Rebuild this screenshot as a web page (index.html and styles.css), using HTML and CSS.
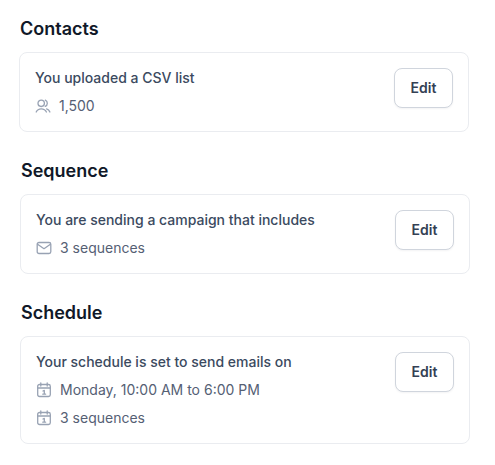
FILE: index.html
```html
<!DOCTYPE html>
<html lang="en">
<head>
  <meta charset="UTF-8">
  <title>Campaign summary</title>
  <meta name="viewport" content="width=device-width, initial-scale=1.0">
  <link rel="stylesheet" href="styles.css">
</head>
<body>
  <svg class="sprite" width="0" height="0">
    <symbol id="icon-users" viewBox="0 0 16 16">
      <circle cx="6.200" cy="5.300" r="3.200"/>
      <path d="M1.200 14c.9-2 2.700-3.200 5-3.200s4.300 1.200 5.200 3.200M10.300 2.200c1.200.5 2 1.700 2 3.100s-.8 2.600-2 3.100M11.600 10.800c1.500.4 2.700 1.600 3.300 3.200"/>
    </symbol>
    <symbol id="icon-mail" viewBox="0 0 16 16">
      <rect x="1.200" y="2.500" width="13.600" height="11" rx="1.800"/>
      <path d="M1.600 4.200L8 8.700l6.400-4.500"/>
    </symbol>
    <symbol id="icon-calendar" viewBox="0 0 16 16">
      <rect x="1.700" y="2.500" width="12.600" height="12" rx="1.800"/>
      <path d="M1.700 6h12.600M4.800 1v3M11.200 1v3M7 9l1.300-.6v3.800M6.800 12.200h2.800"/>
    </symbol>
  </svg>

  <main class="summary">
    <section class="step step-first">
      <h2>Contacts</h2>
      <div class="card">
        <div class="details">
          <p class="title">You uploaded a CSV list</p>
          <div class="meta"><svg class="icon"><use href="#icon-users"/></svg><span>1,500</span></div>
        </div>
        <button class="edit-btn" type="button">Edit</button>
      </div>
    </section>

    <section class="step">
      <h2>Sequence</h2>
      <div class="card">
        <div class="details">
          <p class="title">You are sending a campaign that includes</p>
          <div class="meta"><svg class="icon"><use href="#icon-mail"/></svg><span>3 sequences</span></div>
        </div>
        <button class="edit-btn" type="button">Edit</button>
      </div>
    </section>

    <section class="step">
      <h2>Schedule</h2>
      <div class="card">
        <div class="details">
          <p class="title">Your schedule is set to send emails on</p>
          <div class="meta"><svg class="icon"><use href="#icon-calendar"/></svg><span>Monday, 10:00 AM to 6:00 PM</span></div>
          <div class="meta"><svg class="icon"><use href="#icon-calendar"/></svg><span>3 sequences</span></div>
        </div>
        <button class="edit-btn" type="button">Edit</button>
      </div>
    </section>
  </main>
</body>
</html>
```
FILE: styles.css
```css
* {
  box-sizing: border-box;
}
body {
  margin: 0;
  font-family: 'Inter', sans-serif;
  font-size: 14px;
  line-height: 20px;
  background: #fff;
  color: #556074;
}
.sprite {
  display: block;
}
.summary {
  display: flex;
  flex-direction: column;
  gap: 25px;
  padding: 15px 25px 0 20px;
}
.step-first {
  margin: 0 1px 0 -1px;
}
.step h2 {
  margin: 0 0 9px 1px;
  font-size: 18px;
  line-height: 28px;
  font-weight: 600;
  color: #101828;
}
.card {
  display: flex;
  justify-content: space-between;
  align-items: flex-start;
  padding: 15px;
  border: 1px solid #eaecf0;
  border-radius: 8px;
}
.details {
  display: flex;
  flex-direction: column;
  gap: 8px;
}
.title {
  margin: 0;
  font-weight: 500;
  color: #3b4a60;
}
.meta {
  display: flex;
  align-items: center;
  gap: 8px;
}
.icon {
  width: 16px;
  height: 16px;
  fill: none;
  stroke: #98a2b3;
  stroke-width: 1.3;
  stroke-linecap: round;
  stroke-linejoin: round;
}
.edit-btn {
  width: 59px;
  height: 40px;
  padding: 0;
  font-family: inherit;
  font-size: 14px;
  line-height: 20px;
  font-weight: 600;
  color: #344054;
  background: #fff;
  border: 1px solid #d0d5dd;
  border-radius: 8px;
  box-shadow: 0 1px 2px rgba(16, 24, 40, 0.05);
}
```
